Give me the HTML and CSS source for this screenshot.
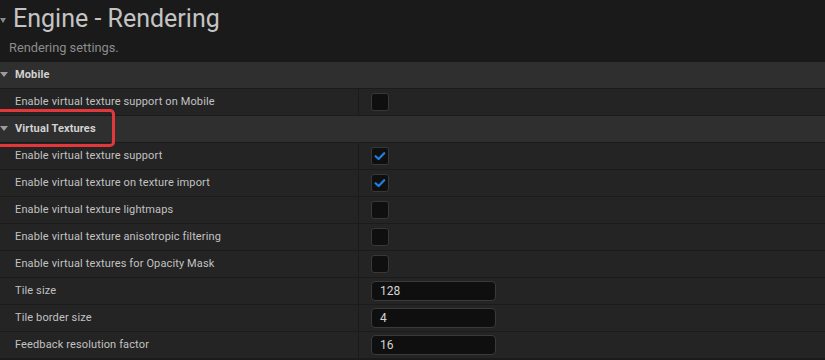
FILE: index.html
```html
<!DOCTYPE html>
<html>
<head>
<meta charset="utf-8">
<link rel="stylesheet" href="styles.css">
</head>
<body>
<div class="page">
  <header class="intro">
    <div class="title-line">
      <span class="tri tri-title"></span>
      <h1 class="title">Engine - Rendering</h1>
    </div>
    <p class="subtitle">Rendering settings.</p>
  </header>

  <section class="category">
    <div class="cat-head"><span class="tri"></span><span class="cat-name">Mobile</span></div>
    <div class="prop">
      <div class="prop-name">Enable virtual texture support on Mobile</div>
      <div class="prop-value"><span class="check"></span></div>
    </div>
  </section>

  <section class="category">
    <div class="cat-head"><span class="tri"></span><span class="cat-name">Virtual Textures</span><span class="marker"></span></div>
    <div class="prop">
      <div class="prop-name">Enable virtual texture support</div>
      <div class="prop-value"><span class="check"><svg viewBox="0 0 18 18" width="18" height="18"><path d="M4.6 9.2 L7.6 12 L13.2 6.2" fill="none" stroke="#1f7fe5" stroke-width="2.2" stroke-linecap="round" stroke-linejoin="round"/></svg></span></div>
    </div>
    <div class="prop">
      <div class="prop-name">Enable virtual texture on texture import</div>
      <div class="prop-value"><span class="check"><svg viewBox="0 0 18 18" width="18" height="18"><path d="M4.6 9.2 L7.6 12 L13.2 6.2" fill="none" stroke="#1f7fe5" stroke-width="2.2" stroke-linecap="round" stroke-linejoin="round"/></svg></span></div>
    </div>
    <div class="prop">
      <div class="prop-name">Enable virtual texture lightmaps</div>
      <div class="prop-value"><span class="check"></span></div>
    </div>
    <div class="prop">
      <div class="prop-name">Enable virtual texture anisotropic filtering</div>
      <div class="prop-value"><span class="check"></span></div>
    </div>
    <div class="prop">
      <div class="prop-name">Enable virtual textures for Opacity Mask</div>
      <div class="prop-value"><span class="check"></span></div>
    </div>
    <div class="prop">
      <div class="prop-name">Tile size</div>
      <div class="prop-value"><span class="num">128</span></div>
    </div>
    <div class="prop">
      <div class="prop-name">Tile border size</div>
      <div class="prop-value"><span class="num">4</span></div>
    </div>
    <div class="prop">
      <div class="prop-name">Feedback resolution factor</div>
      <div class="prop-value"><span class="num">16</span></div>
    </div>
  </section>
</div>
</body>
</html>
```

FILE: styles.css
```css
* { box-sizing: border-box; }
html, body {
  margin: 0;
  padding: 0;
  background: #1a1a1a;
}
body {
  font-family: Roboto, "Noto Sans", sans-serif;
  color: #c0c0c0;
  width: 825px;
  height: 360px;
  overflow: hidden;
}
.intro {
  height: 62px;
  display: flex;
  flex-direction: column;
}
.title-line {
  display: flex;
  align-items: center;
  height: 34px;
  padding-top: 4px;
}
.title {
  margin: 0 0 0 7px;
  font-size: 25px;
  font-weight: 400;
  color: #c4c4c4;
  line-height: 30px;
}
.subtitle {
  margin: 7px 0 0 9px;
  font-size: 12.8px;
  color: #8c8c8c;
  line-height: 14px;
}
.tri {
  width: 0;
  height: 0;
  border-left: 4px solid transparent;
  border-right: 4px solid transparent;
  border-top: 5px solid #9c9c9c;
  flex: none;
}
.tri-title {
  border-top-color: #8a8a8a;
  border-left-width: 3.5px;
  border-right-width: 3.5px;
  margin-top: 2px;
}
.cat-head {
  position: relative;
  height: 27px;
  background: #2f2f2f;
  border-bottom: 1px solid #1b1b1b;
  display: flex;
  align-items: center;
  padding-bottom: 1px;
}
.cat-name {
  margin-left: 7px;
  font-size: 11px;
  font-weight: 700;
  color: #d2d2d2;
  letter-spacing: 0.12px;
}
.marker {
  position: absolute;
  left: -10px;
  top: -7px;
  width: 125px;
  height: 38px;
  border: 3px solid #e2383b;
  border-radius: 5px;
  pointer-events: none;
}
.prop {
  display: flex;
  height: 27px;
  background: #242424;
  border-bottom: 1px solid #1b1b1b;
}
.prop-name {
  width: 359px;
  border-right: 1px solid #1b1b1b;
  display: flex;
  align-items: center;
  padding-left: 15px;
  padding-bottom: 2px;
  font-size: 11px;
  color: #c2c2c2;
  letter-spacing: 0.13px;
}
.prop-value {
  flex: 1;
  display: flex;
  align-items: center;
  padding-left: 12px;
}
.check {
  width: 18px;
  height: 18px;
  background: #0f0f0f;
  border: 1px solid #383838;
  border-radius: 3px;
  display: flex;
  align-items: center;
  justify-content: center;
}
.check svg { display: block; margin: -1px; }
.num {
  width: 125px;
  height: 20px;
  background: #0f0f0f;
  border: 1px solid #3a3a3a;
  border-radius: 4px;
  padding-left: 8px;
  padding-bottom: 1px;
  font-size: 12px;
  color: #d4d4d4;
  display: flex;
  align-items: center;
}
```
